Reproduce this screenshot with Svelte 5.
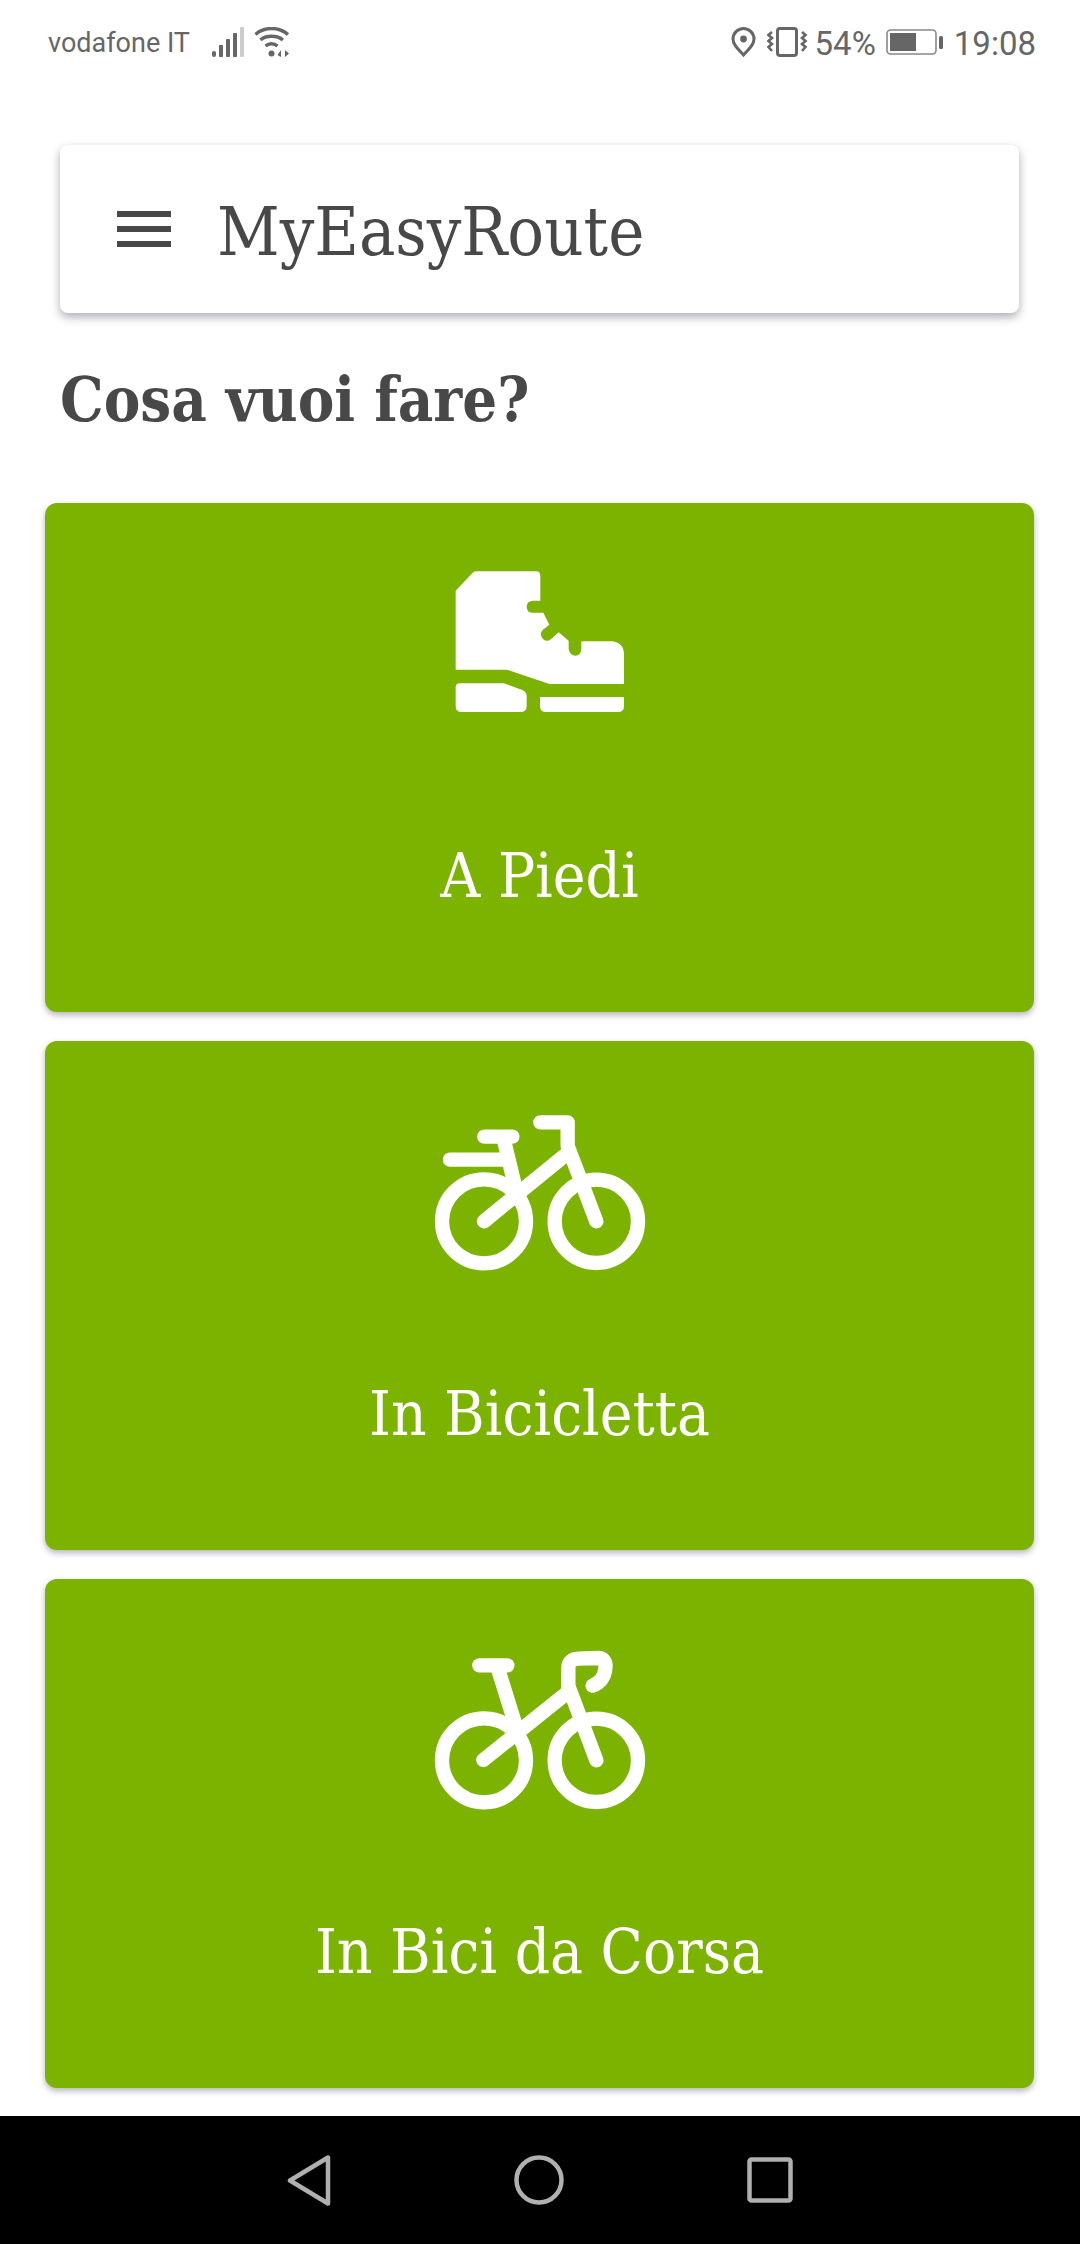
<script lang="ts">
	const modes = [
		{ id: 'walk', label: 'A Piedi', viewBox: '-30 22 720 570' },
		{ id: 'bike', label: 'In Bicicletta', viewBox: '0 0 720 570' },
		{ id: 'road', label: 'In Bici da Corsa', viewBox: '0 -6 720 570' }
	];
</script>

<div class="page">
	<header class="status">
		<span class="carrier">vodafone IT</span>
		<svg class="signal" width="34" height="30" viewBox="0 0 34 30">
			<rect x="1" y="24" width="4" height="6" rx="2" fill="#666" />
			<rect x="8" y="18" width="4" height="12" rx="1" fill="#666" />
			<rect x="15" y="12" width="4" height="18" rx="1" fill="#666" />
			<rect x="22" y="6" width="4" height="24" rx="1" fill="#666" />
			<rect x="29" y="0" width="4" height="30" rx="1" fill="#ccc" />
		</svg>
		<svg class="wifi" width="38" height="30" viewBox="0 0 38 30" fill="none" stroke="#666" stroke-width="3.4">
			<path d="M1.5 7.5 C10 -0.5 25 -0.5 34 7.5" />
			<path d="M6.5 13 C12 8 23 8 29 13" />
			<path d="M11.5 19 C15 16 20 16 23.5 19" />
			<circle cx="17.5" cy="26.5" r="3" fill="#666" stroke="none" />
			<path d="M27 23 L27 30 L23.5 28 Z M31 23 L31 30 L35 26.5 Z" fill="#666" stroke="none" />
		</svg>
		<span class="spacer"></span>
		<svg class="pin" width="25" height="30" viewBox="0 0 25 30" fill="none">
			<path d="M12.5 28 C6 21 2 17 2 12 A10.5 10.5 0 0 1 23 12 C23 17 19 21 12.5 28 Z" stroke="#666" stroke-width="3" />
			<circle cx="12.5" cy="12" r="3.4" fill="#666" />
		</svg>
		<svg class="vibrate" width="42" height="30" viewBox="0 0 42 30" fill="none" stroke="#666">
			<rect x="10.5" y="1.5" width="19" height="27" rx="2.5" stroke-width="3" />
			<path d="M5 5 L1.5 8 L5 11 L1.5 14 L5 17 L1.5 20 L5 24" stroke-width="2.6" />
			<path d="M35 5 L38.5 8 L35 11 L38.5 14 L35 17 L38.5 20 L35 24" stroke-width="2.6" />
		</svg>
		<span class="percent">54%</span>
		<svg class="battery" width="57" height="26" viewBox="0 0 57 26">
			<rect x="1" y="1" width="49" height="24" rx="3.5" fill="none" stroke="#888" stroke-width="1.6" />
			<rect x="4" y="4" width="26" height="18" fill="#666" />
			<rect x="53" y="7" width="4" height="13" rx="1.5" fill="#666" />
		</svg>
		<span class="clock">19:08</span>
	</header>

	<div class="appbar">
		<svg width="54" height="36" viewBox="0 0 54 36" fill="#484848">
			<rect width="54" height="6" />
			<rect y="15" width="54" height="6" />
			<rect y="30" width="54" height="6" />
		</svg>
		<span class="title">MyEasyRoute</span>
	</div>

	<h1>Cosa vuoi fare?</h1>

	<main class="modes">
		{#each modes as mode (mode.id)}
			<button class="card" type="button">
				<svg class="icon" viewBox={mode.viewBox} width="240" height="190">
					{#if mode.id === 'walk'}
						<path
							fill="#fff"
							d="M77 120 L128 66 Q132 62 140 62 L318 62 Q331 62 331 76 L331 150 L308 150 Q290 152 290 168 Q290 186 308 186 L340 186 L358 222 L338 238 Q326 252 340 266 Q352 276 364 264 L386 245 L416 270 L416 295 Q420 315 436 315 Q452 315 454 295 L454 272 L545 272 Q582 276 582 312 L582 400 L358 400 L230 357 L77 357 Z"
						/>
						<path
							fill="#fff"
							d="M77 410 Q77 398 90 398 L222 398 L277 418 Q290 424 290 436 L290 466 Q290 484 272 484 L95 484 Q77 484 77 466 Z"
						/>
						<path fill="#fff" d="M330 439 L582 439 L582 466 Q582 484 564 484 L348 484 Q330 484 330 466 Z" />
					{:else if mode.id === 'bike'}
						<g fill="none" stroke="#fff" stroke-width="43" stroke-linecap="round" stroke-linejoin="round">
							<circle cx="192" cy="376" r="126" />
							<circle cx="529" cy="376" r="125" />
							<path d="M192 376 L442 172" />
							<path d="M361 79 L443 79 L443 150 L529 376" />
							<path d="M193 122 L277 122" />
							<path d="M250 125 L285 270" />
							<path d="M90 191 L250 191" />
						</g>
					{:else}
						<g fill="none" stroke="#fff" stroke-width="43" stroke-linecap="round" stroke-linejoin="round">
							<circle cx="192" cy="373" r="126" />
							<circle cx="529" cy="373" r="125" />
							<path d="M190 372 L442 170" />
							<path d="M178 88 L262 88" />
							<path d="M232 92 L285 262" />
							<path d="M529 373 L445 150 L445 95 Q445 70 475 68 L535 66 Q560 68 556 98 Q552 135 518 149" />
						</g>
					{/if}
				</svg>
				<span class="label">{mode.label}</span>
			</button>
		{/each}
	</main>

	<nav class="softkeys">
		<svg width="44" height="51" viewBox="0 0 44 51" fill="none" stroke="#b0b0b0" stroke-width="4.5" stroke-linejoin="round">
			<path d="M3 25.5 L41 2.5 L41 48.5 Z" />
		</svg>
		<svg width="50" height="50" viewBox="0 0 50 50" fill="none" stroke="#b0b0b0" stroke-width="4.5">
			<circle cx="25" cy="25" r="22.5" />
		</svg>
		<svg width="46" height="46" viewBox="0 0 46 46" fill="none" stroke="#b0b0b0" stroke-width="4.5" stroke-linejoin="round">
			<rect x="2.5" y="2.5" width="41" height="41" rx="2" />
		</svg>
	</nav>
</div>

<style>
	:global(body) {
		margin: 0;
		background: #fff;
		font-family: 'DejaVu Serif Condensed', 'DejaVu Serif', serif;
	}

	.page {
		display: flex;
		flex-direction: column;
		height: 2244px;
		overflow: hidden;
	}

	.status {
		display: flex;
		align-items: center;
		flex: 0 0 84px;
		box-sizing: border-box;
		padding: 0 44px 0 48px;
		color: #666;
		font-family: Roboto, sans-serif;
		font-size: 27px;
	}

	.status span {
		padding-top: 2px;
	}

	.signal {
		margin-left: 21px;
	}

	.wifi {
		margin-left: 9px;
	}

	.spacer {
		flex: 1;
	}

	.vibrate {
		margin-left: 11px;
	}

	.percent {
		margin-left: 6px;
		font-size: 33px;
	}

	.battery {
		margin-left: 10px;
	}

	.clock {
		margin-left: 11px;
		font-size: 33px;
	}

	.appbar {
		display: flex;
		align-items: center;
		gap: 46px;
		height: 168px;
		box-sizing: border-box;
		margin: 61px 61px 0 60px;
		padding-left: 57px;
		border-radius: 8px;
		background: #fff;
		box-shadow: 0 4px 10px rgb(40 40 60 / 38%);
	}

	.title {
		padding-top: 4px;
		font-size: 68px;
		color: #484848;
	}

	h1 {
		margin: 52px 0 0 60px;
		font-size: 61px;
		line-height: 70px;
		font-weight: 700;
		color: #484848;
	}

	.modes {
		display: flex;
		flex-direction: column;
		gap: 29px;
		margin: 68px 46px 0 45px;
	}

	.card {
		display: flex;
		flex-direction: column;
		align-items: center;
		height: 509px;
		box-sizing: border-box;
		padding: 55px 0 0;
		border: 0;
		border-radius: 12px;
		background: #7cb200;
		box-shadow: 0 3px 6px rgb(40 40 60 / 35%);
		font-family: inherit;
	}

	.icon {
		display: block;
	}

	.label {
		margin-top: 93px;
		font-size: 61.5px;
		line-height: 70px;
		color: #fff;
	}

	.softkeys {
		display: flex;
		align-items: center;
		justify-content: center;
		gap: 183px;
		height: 128px;
		margin-top: auto;
		background: #000;
	}
</style>
